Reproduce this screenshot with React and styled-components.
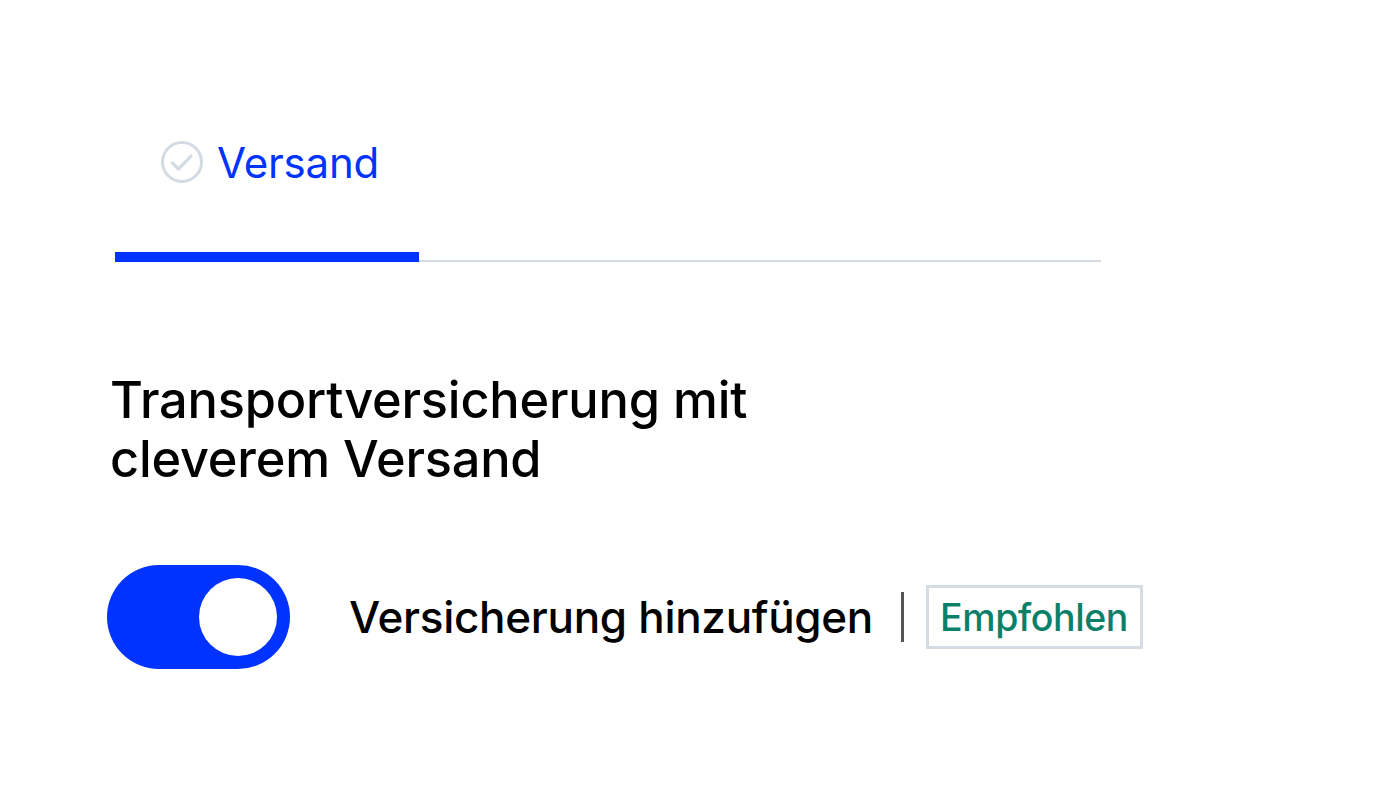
import React, { useState } from "react";
import styled, { createGlobalStyle } from "styled-components";

const Global = createGlobalStyle`
  html, body { margin: 0; padding: 0; background: #fff; }
  body { font-family: Inter, "Liberation Sans", sans-serif; color: #000; }
`;

const Page = styled.div`
  width: 1391px;
  height: 801px;
  box-sizing: border-box;
  padding-top: 136px;
`;

const Tabs = styled.div`
  width: 986px;
  margin-left: 115px;
`;

const TabLabel = styled.div`
  display: flex;
  align-items: center;
  gap: 13px;
  padding-left: 45px;
  height: 52px;
  font-size: 42px;
  color: #0033ff;
  letter-spacing: -0.2px;
`;

const Track = styled.div`
  display: flex;
  align-items: flex-end;
  margin-top: 64px;
`;

const Fill = styled.div`
  width: 304px;
  height: 10px;
  background: #0033ff;
`;

const Rest = styled.div`
  flex: 1;
  height: 2px;
  background: #d5dce4;
`;

const Heading = styled.h2`
  margin: 108px 0 0 110px;
  font-size: 50.5px;
  font-weight: 500;
  line-height: 59px;
  letter-spacing: -0.2px;
`;

const Row = styled.div`
  display: flex;
  align-items: center;
  margin: 77px 0 0 107px;
`;

const Switch = styled.button`
  width: 183px;
  height: 104px;
  border: none;
  border-radius: 52px;
  padding: 13px;
  background: ${(p) => (p.$on ? "#0033ff" : "#ccd3db")};
  display: flex;
  justify-content: ${(p) => (p.$on ? "flex-end" : "flex-start")};
  align-items: center;
  cursor: pointer;
  box-sizing: border-box;
`;

const Knob = styled.span`
  width: 78px;
  height: 78px;
  border-radius: 50%;
  background: #fff;
`;

const Label = styled.span`
  margin-left: 59px;
  font-size: 44px;
  font-weight: 500;
  letter-spacing: -0.3px;
`;

const Divider = styled.span`
  width: 3px;
  height: 50px;
  background: #555;
  margin: 0 22px 0 28px;
`;

const Badge = styled.span`
  border: 3px solid #d5dce4;
  padding: 0 12px 0 11px;
  height: 64px;
  box-sizing: border-box;
  display: flex;
  align-items: center;
  font-size: 37.5px;
  font-weight: 500;
  color: #0b8068;
  letter-spacing: -0.4px;
`;

const CheckCircle = () => (
  <svg width="44" height="44" viewBox="0 0 44 44" fill="none">
    <circle cx="22" cy="22" r="19.5" stroke="#d3dae3" strokeWidth="3" />
    <path d="M12.5 23 L18.5 29 L31 16" stroke="#d3dae3" strokeWidth="3.2" strokeLinecap="round" strokeLinejoin="round" />
  </svg>
);

export default function App() {
  const [on, setOn] = useState(true);
  return (
    <>
      <Global />
      <Page>
        <Tabs>
          <TabLabel>
            <CheckCircle />
            Versand
          </TabLabel>
          <Track>
            <Fill />
            <Rest />
          </Track>
        </Tabs>
        <Heading>
          Transportversicherung mit
          <br />
          cleverem Versand
        </Heading>
        <Row>
          <Switch $on={on} onClick={() => setOn(!on)} aria-pressed={on}>
            <Knob />
          </Switch>
          <Label>Versicherung hinzufügen</Label>
          <Divider />
          <Badge>Empfohlen</Badge>
        </Row>
      </Page>
    </>
  );
}
